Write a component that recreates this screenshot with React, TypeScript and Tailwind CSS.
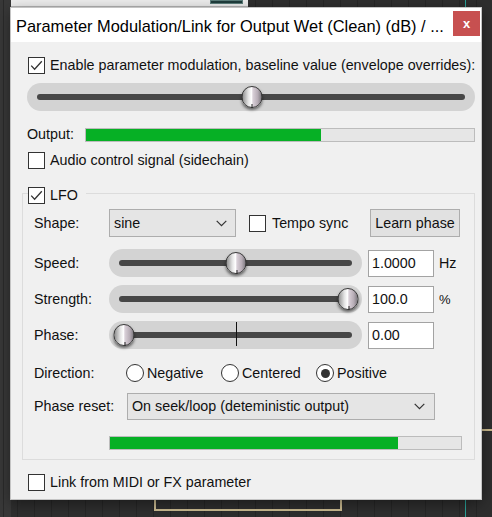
import React from "react";

const Check = ({ checked }: { checked?: boolean }) => (
  <div className="w-[17px] h-[17px] border border-[#333333] bg-white flex items-center justify-center shrink-0">
    {checked && (
      <svg width="13" height="11" viewBox="0 0 13 11">
        <path d="M1.2 5.6 L4.6 9.2 L11.8 1.2" fill="none" stroke="#333333" strokeWidth="1.3" />
      </svg>
    )}
  </div>
);

const Radio = ({ on }: { on?: boolean }) => (
  <div className="w-[18px] h-[18px] rounded-full border border-[#333333] bg-white flex items-center justify-center shrink-0">
    {on && <div className="w-[9px] h-[9px] rounded-full bg-[#333333]" />}
  </div>
);

const Chevron = () => (
  <svg width="11" height="7" viewBox="0 0 11 7" className="shrink-0">
    <path d="M0.7 0.8 L5.5 5.6 L10.3 0.8" fill="none" stroke="#333333" strokeWidth="1.2" />
  </svg>
);

const Knob = ({ pos }: { pos: number }) => (
  <div
    className="absolute top-[3px] -translate-x-1/2 w-[21px] h-[22px] rounded-full border border-[#3a3a3a] bg-[linear-gradient(90deg,#8f8f8f,#e2e2e2_30%,#ffffff_47%,#d9d0d8_55%,#b7adb6_80%,#7e7a80)] shadow-[0_2px_3px_rgba(0,0,0,0.55)]"
    style={{ left: `${pos}%` }}
  >
    <div className="absolute left-1/2 bottom-[-1px] w-[1px] h-[4px] bg-[#222222]" />
  </div>
);

const Slider = ({ cls, pos, tick }: { cls: string; pos: number; tick?: boolean }) => (
  <div className={`relative h-[28px] rounded-full bg-[#d3d3d3] flex items-center px-[10px] shrink-0 ${cls}`}>
    <div className="h-[6px] w-full rounded-full bg-[#474747]" />
    {tick && <div className="absolute left-1/2 top-[1px] w-[1.5px] h-[24px] bg-[#111111]" />}
    <div className="absolute inset-y-0 left-[15px] right-[14px]">
      <Knob pos={pos} />
    </div>
  </div>
);

const Bar = ({ cls, fill }: { cls: string; fill: number }) => (
  <div className={`border border-[#bcbcbc] bg-[#e6e6e6] shrink-0 ${cls}`}>
    <div className="h-full bg-[#06b025]" style={{ width: `${fill}%` }} />
  </div>
);

const Input = ({ v }: { v: string }) => (
  <div className="w-[66px] h-[27px] bg-white border border-[#a3a3a3] flex items-center pl-[3px] ml-[6px] shrink-0">
    {v}
  </div>
);

export default function App() {
  return (
    <div className="relative w-[492px] h-[517px] overflow-hidden bg-[#2e2e2e] font-['Liberation_Sans',Arial,sans-serif] text-[14.3px] text-[#111111] leading-none">
      {/* background application */}
      <div className="absolute inset-0 bg-[repeating-linear-gradient(90deg,#262626_0px,#262626_1px,transparent_1px,transparent_17px)]" />
      <div className="absolute left-0 top-0 w-[248px] h-[7px] bg-[#ededed] border-b border-[#b5b5b5]">
        <div className="absolute left-[210px] top-0 w-[33px] h-[4px] bg-[#1f3d3c] border border-[#5c7d7a]" />
      </div>
      <div className="absolute left-0 top-0 w-[11px] h-full bg-[#383838]" />
      <div className="absolute left-[3px] top-0 w-[1px] h-full bg-[#2a2a2a]" />
      <div className="absolute left-[465px] top-0 w-[1px] h-full bg-[#2aa39a]" />
      <div className="absolute left-[481px] top-[429px] w-[11px] h-[2px] bg-[#c9b98c]" />
      <div className="absolute left-[154px] top-[490px] w-[188px] h-[21px] border-2 border-[#cdbd92]" />

      {/* dialog window */}
      <div className="absolute left-[11px] top-[8px] w-[470px] h-[491px] bg-[#f0f0f0] shadow-[0_0_0_1px_#c4c4c4,0_4px_14px_rgba(0,0,0,0.45)] flex flex-col">
        <div className="h-[34px] bg-white flex items-start shrink-0">
          <div className="pl-[5px] pt-[10px] text-[16.4px] text-black whitespace-nowrap">
            Parameter Modulation/Link for Output Wet (Clean) (dB) / ...
          </div>
          <div className="ml-auto mr-[1px] mt-[3px] w-[27px] h-[25px] bg-[#c75050] flex items-center justify-center text-white text-[13px] font-bold">
            x
          </div>
        </div>

        <div className="flex flex-col pl-[16px] pr-[6px]">
          <div className="mt-[14px] h-[19px] flex items-center gap-[5px] pl-[1px] whitespace-nowrap">
            <Check checked />
            <span>Enable parameter modulation, baseline value (envelope overrides):</span>
          </div>

          <div className="mt-[8px]">
            <Slider cls="w-[448px]" pos={50} />
          </div>

          <div className="mt-[15px] h-[17px] flex items-center">
            <span className="w-[58px] shrink-0">Output:</span>
            <Bar cls="w-[390px] h-[14px]" fill={60.5} />
          </div>

          <div className="mt-[8px] h-[19px] flex items-center gap-[5px] pl-[1px]">
            <Check />
            <span>Audio control signal (sidechain)</span>
          </div>

          <div className="relative mt-[23px] -ml-[5px] w-[453px] border border-[#dcdcdc] pl-[11px] pr-[14px] pt-[15px] pb-[9px] flex flex-col">
            <div className="absolute left-[5px] -top-[8px] h-[19px] flex items-center gap-[5px] bg-[#f0f0f0] pr-[8px]">
              <Check checked />
              <span>LFO</span>
            </div>

            <div className="h-[28px] flex items-center">
              <span className="w-[75px] shrink-0">Shape:</span>
              <div className="w-[127px] h-[28px] bg-[#e5e5e5] border border-[#adadad] flex items-center pl-[4px] pr-[8px] shrink-0">
                <span>sine</span>
                <span className="ml-auto"><Chevron /></span>
              </div>
              <div className="ml-[13px] flex items-center gap-[6px]">
                <Check />
                <span>Tempo sync</span>
              </div>
              <div className="ml-auto w-[90px] h-[28px] bg-[#e1e1e1] border border-[#adadad] flex items-center justify-center">
                Learn phase
              </div>
            </div>

            <div className="mt-[12px] h-[28px] flex items-center">
              <span className="w-[75px] shrink-0">Speed:</span>
              <Slider cls="w-[253px]" pos={50} />
              <Input v="1.0000" />
              <span className="ml-[5px]">Hz</span>
            </div>

            <div className="mt-[8px] h-[28px] flex items-center">
              <span className="w-[75px] shrink-0">Strength:</span>
              <Slider cls="w-[253px]" pos={100} />
              <Input v="100.0" />
              <span className="ml-[5px] text-[13px]">%</span>
            </div>

            <div className="mt-[8px] h-[28px] flex items-center">
              <span className="w-[75px] shrink-0">Phase:</span>
              <Slider cls="w-[253px]" pos={0} tick />
              <Input v="0.00" />
            </div>

            <div className="mt-[15px] h-[18px] flex items-center">
              <span className="w-[92px] shrink-0">Direction:</span>
              <div className="w-[95px] flex items-center gap-[3px] shrink-0">
                <Radio />
                <span>Negative</span>
              </div>
              <div className="w-[95px] flex items-center gap-[3px] shrink-0">
                <Radio />
                <span>Centered</span>
              </div>
              <div className="flex items-center gap-[3px]">
                <Radio on />
                <span>Positive</span>
              </div>
            </div>

            <div className="mt-[11px] h-[27px] flex items-center">
              <span className="w-[93px] shrink-0">Phase reset:</span>
              <div className="w-[308px] h-[27px] bg-[#e5e5e5] border border-[#adadad] flex items-center pl-[4px] pr-[9px] shrink-0">
                <span>On seek/loop (deteministic output)</span>
                <span className="ml-auto"><Chevron /></span>
              </div>
            </div>

            <div className="mt-[16px] ml-[75px]">
              <Bar cls="w-[353px] h-[14px]" fill={82} />
            </div>
          </div>

          <div className="mt-[13px] h-[19px] flex items-center gap-[5px] pl-[1px]">
            <Check />
            <span>Link from MIDI or FX parameter</span>
          </div>
        </div>
      </div>
    </div>
  );
}
